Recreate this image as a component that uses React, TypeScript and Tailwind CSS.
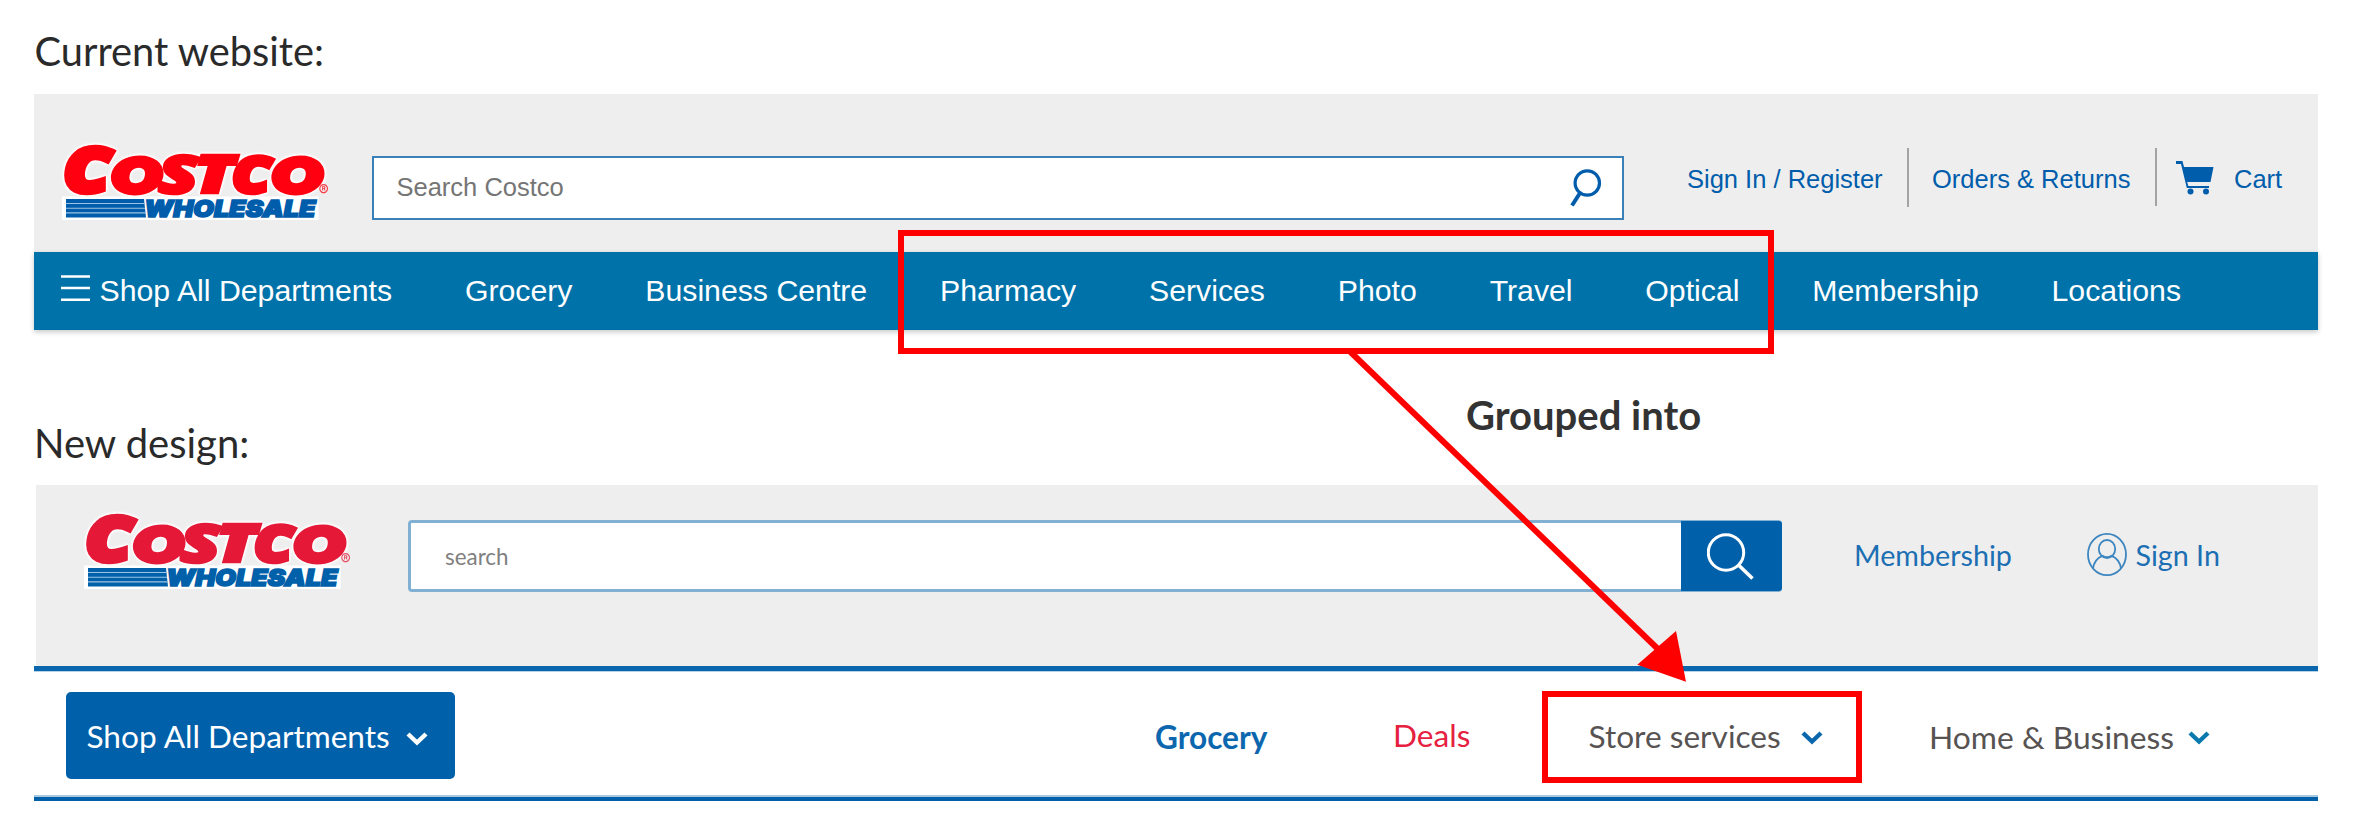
type Glyph = {
  ch: string;
  font: string;
  left: number;
  right: number;
  top: number;
  stroke: number;
  x: number;
  w: number;
  y: number;
  h: number;
};

const GLYPHS: Glyph[] = [
  { ch: "C", font: "Open Sans", left: 5, right: 67, top: 72, stroke: 9, x: 2, w: 52, y: 0, h: 50.5 },
  { ch: "O", font: "Lato", left: 3, right: 74, top: 73, stroke: 15, x: 48.5, w: 53.5, y: 9.5, h: 41 },
  { ch: "S", font: "Open Sans", left: 2, right: 56, top: 72, stroke: 7, x: 95.5, w: 43.5, y: 9.5, h: 41 },
  { ch: "T", font: "Open Sans", left: 7, right: 62, top: 71, stroke: 9, x: 135.5, w: 43, y: 10.5, h: 39.5 },
  { ch: "C", font: "Open Sans", left: 5, right: 67, top: 72, stroke: 9, x: 170.5, w: 43, y: 9.5, h: 41 },
  { ch: "O", font: "Lato", left: 3, right: 74, top: 73, stroke: 15, x: 209, w: 54, y: 9.5, h: 41 },
];

function glyphTransform(g: Glyph) {
  const sx = g.w / (g.right - g.left + g.stroke);
  const sy = g.h / (g.top + 1 + g.stroke);
  return `translate(${g.x - (g.left - g.stroke / 2) * sx} ${g.y + g.h - (1 + g.stroke / 2) * sy}) scale(${sx} ${sy})`;
}

function Logo({ red, blue }: { red: string; blue: string }) {
  return (
    <svg width="274" height="78" viewBox="0 -2 274 78" className="block shrink-0 overflow-visible font-['Inter']">
      <rect x="0" y="51.5" width="256.5" height="23.5" fill="#fff" />
      <g
        fontSize="100"
        fontWeight="900"
        fontStyle="italic"
        fill={red}
        stroke={red}
        className="[filter:drop-shadow(0_0_1px_#fff)_drop-shadow(0_0_1px_#fff)_drop-shadow(0_0_1px_#fff)]"
      >
        {GLYPHS.map((g, i) => (
          <text key={i} fontFamily={g.font} strokeWidth={g.stroke} transform={glyphTransform(g)}>
            {g.ch}
          </text>
        ))}
      </g>
      <text x="256.5" y="51" fontSize="15.5" fontWeight="600" fill={red} opacity="0.75">®</text>
      <g fill={blue}>
        <path d="M4 54H82L84 72.6H4Z" />
        <path d="M4 58.5H82.5M4 63.2H83M4 67.9H83.5" stroke="#9cc3e2" strokeWidth="1.1" />
        <text
          transform="translate(82.3 71.7) scale(0.267 0.229)"
          fontSize="100"
          fontWeight="900"
          fontStyle="italic"
          stroke={blue}
          strokeWidth="7"
        >
          WHOLESALE
        </text>
      </g>
    </svg>
  );
}

function Chevron({ color }: { color: string }) {
  return (
    <svg width="22" height="15" viewBox="0 0 22 15" className="block shrink-0">
      <path d="M2 3 L11 11.5 L20 3" fill="none" stroke={color} strokeWidth="4.4" />
    </svg>
  );
}

const NAV = ["Grocery", "Business Centre", "Pharmacy", "Services", "Photo", "Travel", "Optical", "Membership", "Locations"];

function CurrentHeader() {
  return (
    <header className="ml-[34px] w-[2284px] font-['Liberation_Sans',sans-serif]">
      <div className="flex h-[158px] items-start bg-[#eeeeee] text-[25.5px] leading-[30px] text-[#005dab]">
        <div className="ml-[27.5px] mt-[48.5px]">
          <Logo red="#ff0010" blue="#005dab" />
        </div>
        <div className="ml-[36.5px] mt-[62px] flex h-[64px] w-[1252px] items-center justify-between border-2 border-[#3a80b8] bg-white pr-[20px] pl-[22.5px]">
          <span className="-mt-[2px] text-[#757575]">Search Costco</span>
          <svg width="34" height="40" viewBox="0 0 34 40" className="block">
            <circle cx="19.3" cy="15" r="12.2" fill="none" stroke="#005dab" strokeWidth="3.2" />
            <path d="M12 25 L4 37.5" stroke="#005dab" strokeWidth="4" />
          </svg>
        </div>
        <span className="ml-[63px] mt-[70px] w-[220px] whitespace-nowrap">Sign In / Register</span>
        <div className="mt-[54px] h-[59px] w-[2px] bg-[#a3a3a3]" />
        <span className="ml-[23px] mt-[70px] w-[223px] whitespace-nowrap">Orders &amp; Returns</span>
        <div className="mt-[54px] h-[58px] w-[2px] bg-[#a3a3a3]" />
        <svg width="38" height="34" viewBox="0 0 38 34" className="ml-[19px] mt-[67px] block" fill="#005dab">
          <path d="M0 0H6.5L8 6H37.5L34.5 21H11.2L12.3 25H33V27H10.8L5 3H0Z" />
          <circle cx="14.5" cy="30.5" r="3" />
          <circle cx="30" cy="30.5" r="3" />
        </svg>
        <span className="ml-[20px] mt-[70px]">Cart</span>
      </div>
      <nav className="flex h-[78px] items-center gap-[72.8px] whitespace-nowrap bg-[#0072aa] pl-[27px] text-[30.25px] text-white shadow-[0_2px_5px_rgba(0,0,0,0.22)]">
        <div className="flex items-center gap-[9.5px]">
          <svg width="29" height="28" viewBox="0 0 29 28" className="-mt-[6px] block" stroke="#fff" strokeWidth="2.6">
            <path d="M0 2.5H29M0 14H29M0 25.7H29" />
          </svg>
          <span>Shop All Departments</span>
        </div>
        {NAV.map((n) => (
          <span key={n}>{n}</span>
        ))}
      </nav>
    </header>
  );
}

function NewHeader() {
  return (
    <header className="ml-[34px] w-[2284px]">
      <div className="ml-[2px] flex h-[181px] items-start bg-[#eeeeee] text-[28.7px] leading-[36px] text-[#1c6fb3]">
        <div className="ml-[48px] mt-[27px]">
          <Logo red="#e51937" blue="#0060a9" />
        </div>
        <div className="ml-[50px] mt-[35px] flex h-[72px] w-[1374px] items-stretch justify-between rounded-[4px] border-[3px] border-[#82b0d3] bg-white pl-[34px]">
          <span className="mt-[16px] text-[22.4px] text-[#808080]">search</span>
          <div className="-my-[2px] -mr-[3px] flex w-[101px] justify-center rounded-r-[3px] bg-[#0060a9]">
            <svg width="50" height="50" viewBox="0 0 50 50" className="mt-[11px] block" fill="none" stroke="#fff" strokeWidth="3">
              <circle cx="19" cy="20.5" r="17.7" />
              <path d="M31.5 33 L45.5 46.5" strokeWidth="3.6" />
            </svg>
          </div>
        </div>
        <span className="ml-[72px] mt-[52px] w-[233px]">Membership</span>
        <svg width="40" height="44" viewBox="0 0 40 44" className="mt-[48px] block" fill="none" stroke="#3d86c0" strokeWidth="1.8">
          <ellipse cx="20" cy="21.5" rx="19" ry="20.6" />
          <ellipse cx="20" cy="16" rx="8.2" ry="9" />
          <path d="M6 35.5C7 28.5 11 24.5 15.5 22.8C18.5 24.6 21.5 24.6 24.5 22.8C29 24.5 33 28.5 34 35.5" />
        </svg>
        <span className="ml-[8.5px] mt-[52px]">Sign In</span>
      </div>
      <div className="h-[6px] border-b border-[#b5d2e8] bg-[#0b67ad]" />
      <nav className="flex h-[123px] items-start whitespace-nowrap bg-white font-['Lato',sans-serif] text-[31.6px] leading-[40px] text-[#575352]">
        <button className="ml-[31.5px] mt-[19.5px] flex h-[87px] w-[389px] items-center rounded-[5px] bg-[#0060a9] pl-[21px] text-white">
          <span className="w-[319.5px] pt-[2px] text-left">Shop All Departments</span>
          <div className="mt-[6px]">
            <Chevron color="#fff" />
          </div>
        </button>
        <span className="ml-[700.5px] mt-[45px] w-[238px] font-bold text-[#0d67ae]">Grocery</span>
        <span className="mt-[43px] w-[195.5px] text-[#e6203f]">Deals</span>
        <span className="mt-[43.5px] w-[212px]">Store services</span>
        <div className="mt-[58px]">
          <Chevron color="#0b67ad" />
        </div>
        <span className="ml-[106.5px] mt-[45px] w-[259px] text-[31.8px]">Home &amp; Business</span>
        <div className="mt-[58px]">
          <Chevron color="#0a7aae" />
        </div>
      </nav>
      <div className="h-[6px] border-t-2 border-[#a9c9e0] bg-[#0060a9]" />
    </header>
  );
}

export default function App() {
  return (
    <main className="relative h-[834px] w-[2354px] overflow-hidden bg-white font-['Lato',sans-serif]">
      <h2 className="h-[94px] pt-[26.5px] pl-[34.5px] text-[39.8px] leading-[48px] text-[#2a2a2a]">Current website:</h2>
      <CurrentHeader />
      <h2 className="h-[155px] pt-[88.5px] pl-[34px] text-[40px] leading-[48px] text-[#2a2a2a]">New design:</h2>
      <NewHeader />
      <div className="absolute left-[898px] top-[230px] h-[124px] w-[876px] border-6 border-[#ff0000]" />
      <div className="absolute left-[1542px] top-[691px] h-[92px] w-[320px] border-6 border-[#ff0000]" />
      <svg width="2354" height="834" viewBox="0 0 2354 834" className="pointer-events-none absolute left-0 top-0">
        <path d="M1350 351.5 L1660 651" stroke="#f00" strokeWidth="6" />
        <path d="M1686 681.7 L1676 631 L1637.3 664.7 Z" fill="#f00" />
      </svg>
      <p className="absolute left-[1466px] top-[390.5px] text-[40px] leading-[48px] font-bold text-[#333333]">Grouped into</p>
    </main>
  );
}
